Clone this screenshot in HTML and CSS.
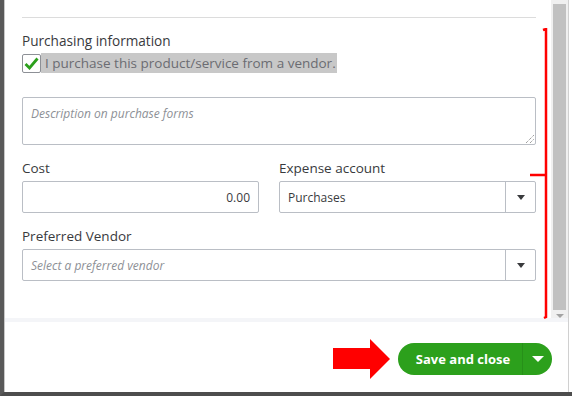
FILE: index.html
```html
<!DOCTYPE html>
<html>
<head>
<meta charset="utf-8">
<link rel="stylesheet" href="styles.css">
</head>
<body>
<div class="window">
  <div class="main">
    <div class="scroll-area">
      <div class="content">
        <div class="sep"></div>
        <div class="heading">Purchasing information</div>
        <label class="check-row">
          <span class="checkbox">
            <svg width="15" height="13" viewBox="0 0 15 13"><path d="M1.5 7 L5.5 11 L13.5 1.5" fill="none" stroke="#2ca01c" stroke-width="2.8"/></svg>
          </span>
          <span class="check-text">I purchase this product/service from a vendor.</span>
        </label>
        <div class="textarea">
          <span class="placeholder">Description on purchase forms</span>
          <svg class="grip" width="9" height="9" viewBox="0 0 9 9"><path d="M1 9 L9 1 M5 9 L9 5" stroke="#777" stroke-width="1" stroke-dasharray="1 1"/></svg>
        </div>
        <div class="row">
          <div class="field cost">
            <div class="label">Cost</div>
            <div class="input num">0.00</div>
          </div>
          <div class="field account">
            <div class="label">Expense account</div>
            <div class="select">
              <span class="value">Purchases</span>
              <span class="caret-box"><span class="caret"></span></span>
            </div>
          </div>
        </div>
        <div class="field full">
          <div class="label">Preferred Vendor</div>
          <div class="select">
            <span class="value placeholder">Select a preferred vendor</span>
            <span class="caret-box"><span class="caret"></span></span>
          </div>
        </div>
      </div>
      <div class="scrollbar">
        <div class="thumb"></div>
        <div class="down"></div>
      </div>
    </div>
    <div class="footer">
      <div class="btn">
        <span class="btn-label">Save and close</span>
        <span class="btn-split"><span class="btn-caret"></span></span>
      </div>
    </div>
    <svg class="bracket" width="20" height="292" viewBox="0 0 20 292">
      <path d="M13 2 L16 1 L16 289 L14 290" fill="none" stroke="#f00" stroke-width="2.5"/>
      <path d="M0 147 L16 147" stroke="#f00" stroke-width="2.5"/>
    </svg>
    <svg class="arrow" width="58" height="41" viewBox="0 0 58 41">
      <polygon points="0,9 37,9 37,0 57,20 37,40 37,30 0,30" fill="#f00"/>
    </svg>
  </div>
</div>
</body>
</html>
```

FILE: styles.css
```css
* { box-sizing: border-box; }
html, body { margin: 0; padding: 0; background: #fff; }
body {
  width: 572px;
  height: 396px;
  overflow: hidden;
  font-family: "Open Sans", "Liberation Sans", sans-serif;
  color: #393a3d;
}
.window {
  width: 572px;
  height: 396px;
  border-left: 4px solid #595959;
  border-bottom: 4px solid #4d4d4d;
  display: flex;
  flex-direction: column;
}
.main {
  position: relative;
  flex: 1;
  display: flex;
  flex-direction: column;
  border-left: 1px solid #c8c8c8;
  border-right: 1px solid #d0d0d0;
  margin-right: 3px;
}
.scroll-area {
  height: 322px;
  display: flex;
  border-bottom: 4px solid #f4f5f8;
}
.content {
  flex: 1;
  padding: 17px 15px 0 17px;
}
.sep {
  height: 1px;
  background: #dcdcdc;
  margin-bottom: 14px;
}
.heading {
  font-size: 13.6px;
  line-height: 18px;
  color: #393a3d;
}
.check-row {
  display: flex;
  align-items: center;
  height: 20px;
  margin-top: 3px;
}
.checkbox {
  width: 19px;
  height: 19px;
  border: 1px solid #8d9096;
  border-radius: 2px;
  background: #fff;
  display: flex;
  align-items: center;
  justify-content: center;
}
.check-text {
  background: #c8c8c8;
  height: 20px;
  line-height: 20px;
  font-size: 13.5px;
  color: #6b6c72;
  padding: 0 1px 0 4px;
}
.textarea {
  position: relative;
  margin-top: 24px;
  height: 48px;
  border: 1px solid #babec5;
  border-radius: 2px;
  padding: 3px 8px;
}
.placeholder {
  font-style: italic;
  color: #8d9096;
  font-size: 12px;
}
.grip { position: absolute; right: 1px; bottom: 1px; }
.row {
  display: flex;
  gap: 20px;
  margin-top: 14px;
}
.field.cost { width: 237px; }
.field.account { flex: 1; }
.label {
  font-size: 13.5px;
  line-height: 18px;
  margin-bottom: 4px;
}
.input, .select {
  height: 32px;
  border: 1px solid #babec5;
  border-radius: 2px;
  font-size: 12px;
  display: flex;
  align-items: center;
}
.input.num {
  justify-content: flex-end;
  padding-right: 8px;
  color: #393a3d;
}
.select .value {
  flex: 1;
  padding-left: 8px;
}
.caret-box {
  width: 30px;
  height: 100%;
  border-left: 1px solid #babec5;
  display: flex;
  align-items: center;
  justify-content: center;
}
.caret {
  width: 0; height: 0;
  border-left: 4px solid transparent;
  border-right: 4px solid transparent;
  border-top: 5px solid #393a3d;
}
.field.full { margin-top: 14px; }
.scrollbar {
  width: 17px;
  background: #f0f0f0;
  padding: 4px 2px 0;
  display: flex;
  flex-direction: column;
  align-items: center;
}
.thumb {
  width: 13px;
  height: 306px;
  background: #c1c1c1;
}
.down {
  margin-top: 4px;
  width: 0; height: 0;
  border-left: 4px solid transparent;
  border-right: 4px solid transparent;
  border-top: 4px solid #a3a3a3;
}
.footer {
  flex: 1;
  display: flex;
  align-items: center;
  justify-content: flex-end;
  padding-right: 16px;
  padding-top: 4px;
}
.btn {
  width: 154px;
  height: 32px;
  border-radius: 16px;
  background: #2ca01c;
  color: #fff;
  display: flex;
  align-items: center;
}
.btn-label {
  flex: 1;
  text-align: center;
  font-weight: 700;
  font-size: 13px;
  padding-left: 6px;
}
.btn-split {
  width: 30px;
  height: 100%;
  border-left: 1px solid #279019;
  display: flex;
  align-items: center;
  justify-content: center;
}
.btn-caret {
  width: 0; height: 0;
  border-left: 6px solid transparent;
  border-right: 6px solid transparent;
  border-top: 6px solid #fff;
}
.bracket { position: absolute; left: 525px; top: 28px; }
.arrow { position: absolute; left: 328px; top: 339px; }
```
